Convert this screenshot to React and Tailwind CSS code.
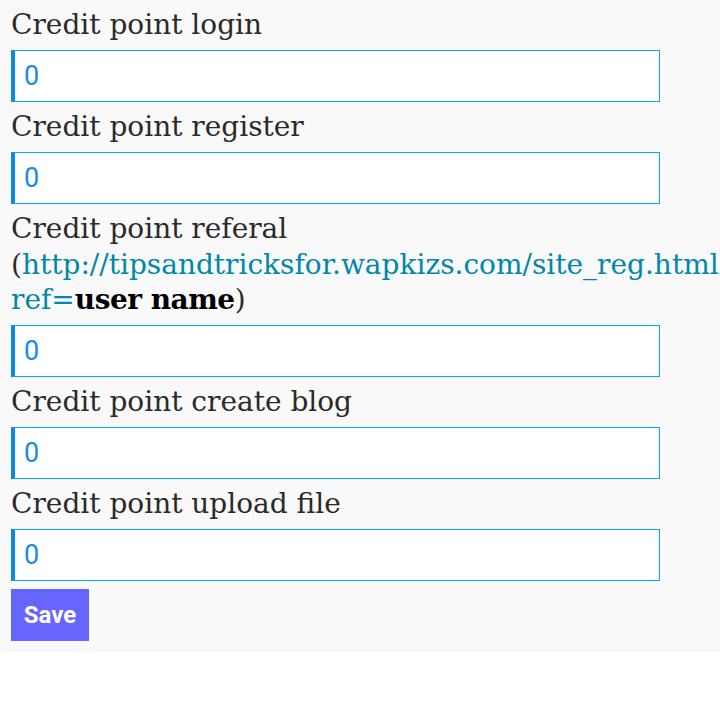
import React from 'react';

const fields = [
    { id: 'login', label: 'Credit point login' },
    { id: 'register', label: 'Credit point register' },
    { id: 'referal', label: 'Credit point referal', referal: true },
    { id: 'blog', label: 'Credit point create blog' },
    { id: 'upload', label: 'Credit point upload file' },
];

const Field = ({ field }) => (
    <div>
        <div className="pt-[7px] pb-[7.5px] text-[28px] leading-[35.5px] text-[#2a2a2a] font-['DejaVu_Serif',serif] whitespace-nowrap">
            {field.label}
            {field.referal && (
                <>
                    <br />(
                    <a href="#" className="text-[#0088aa]">http://tipsandtricksfor.wapkizs.com/site_reg.html?</a>
                    <br />
                    <a href="#" className="text-[#0088aa]">ref=</a>
                    <b className="text-black tracking-[-0.5px]">user name</b>)
                </>
            )}
        </div>
        <input
            type="text"
            defaultValue="0"
            className="block w-[649px] h-[52px] bg-white border border-[#03a9f4] border-l-4 border-l-[#0a8ae6] pl-[9px] text-[27px] text-[#1a8ae8] font-['Roboto',sans-serif] outline-none"
        />
    </div>
);

export default function App() {
    return (
        <div className="bg-[#f9f9f9] px-[11px] pb-[11px] overflow-hidden">
            {fields.map(f => (
                <Field key={f.id} field={f} />
            ))}
            <button className="mt-[8px] w-[78px] h-[52px] bg-[#6666ff] text-white text-[24px] font-bold font-['Roboto',sans-serif]">
                Save
            </button>
        </div>
    );
}
